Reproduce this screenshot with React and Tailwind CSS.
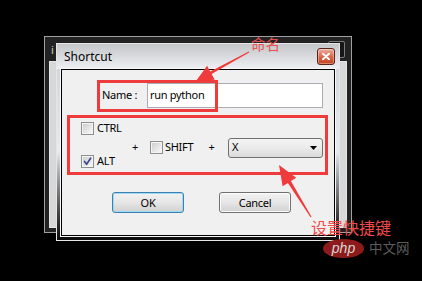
import React from 'react'

const RED = '#ef3b3b'

function Check({checked}) {
  return (
    <span className="flex w-[13px] h-[13px] shrink-0 border border-[#8e8f8f] bg-[#f4f4f4] p-[1px]">
      <span className="relative flex-1 bg-linear-to-br from-[#cfcfcf] to-[#f7f7f7]">
        {checked && (
          <svg width="11" height="11" viewBox="0 0 11 11" className="absolute -left-[1px] -top-[1px]">
            <path d="M2.5 5.5 L4.6 8.3 L8.6 2.2" fill="none" stroke="#3c4a8e" strokeWidth="1.7" strokeLinecap="round" strokeLinejoin="round" />
          </svg>
        )}
      </span>
    </span>
  )
}

function WinButton({label, primary}) {
  return (
    <button className={'w-[72px] h-[21px] rounded-[3px] border text-[11px] leading-none tracking-[-0.3px] text-black bg-linear-to-b from-[#f2f2f2] via-[#e6e6e6] via-50% to-[#d0d0d0] ' + (primary ? 'border-[#3c7fb1] shadow-[inset_0_0_0_1px_#9fdaf3]' : 'border-[#707070] shadow-[inset_0_0_0_1px_#fbfbfb]')}>
      {label}
    </button>
  )
}

export default function App() {
  return (
    <div className="relative w-[422px] h-[281px] bg-black overflow-hidden font-['Noto_Sans',sans-serif]">
      {/* window behind */}
      <div className="absolute left-[44px] top-[36px] w-[308px] h-[197px] border border-[#a0a0a0] bg-[#222] flex flex-col">
        <div className="h-[24px] flex items-start justify-between px-[6px] pt-[4px]">
          <span className="text-[11px] leading-none text-[#cfcfcf] pt-[3px]">i</span>
          <div className="w-[17px] h-[17px] border border-[#7a7a7a] rounded-[2px] bg-[#161616]" />
        </div>
        <div className="flex-1 mx-[4px] mb-[4px] border border-[#e6e6e6] bg-[#d8d8d8]" />
      </div>

      {/* Shortcut dialog */}
      <div className="absolute left-[56px] top-[43px] w-[284px] h-[198px] border border-[#e6e6e6] bg-linear-to-b from-[#cfd2d6] via-[#e6ebf0] via-55% to-[#0a0a0a] flex flex-col">
        <div className="h-[25px] shrink-0 flex items-center justify-between pl-[7px] pr-[4px] bg-linear-to-b from-[#c4c6c9] to-[#eef0f3]">
          <span className="text-[12px] leading-none text-black">Shortcut</span>
          <div className="w-[18px] h-[17px] rounded-[3px] border border-[#5b2418] bg-linear-to-b from-[#eab0a0] via-[#d9694c] via-50% to-[#c2421f] flex items-center justify-center shadow-[inset_0_0_0_1px_rgba(255,255,255,0.35)]">
            <svg width="8" height="7" viewBox="0 0 8 7">
              <path d="M1 0.8 L7 6.2 M7 0.8 L1 6.2" stroke="#fff" strokeWidth="2" strokeLinecap="round" />
            </svg>
          </div>
        </div>

        <div className="flex-1 mx-[4px] mb-[4px] border border-black bg-[#f0f0f0] shadow-[0_0_0_1px_#f8f8f8] pt-[13px] text-[11px] tracking-[-0.3px] text-black">
          <div className="flex items-center pl-[40px]">
            <span className="w-[45px]">Name :</span>
            <div className="w-[176px] h-[25px] border border-[#abadb3] bg-white flex items-center pl-[2px]">run python</div>
          </div>

          <div className="flex items-center pl-[19px] mt-[14px]">
            <div className="w-[45px] flex flex-col gap-[20px]">
              <label className="flex items-center gap-[3px] h-[13px]">
                <Check />
                <span className="text-[11px]">CTRL</span>
              </label>
              <label className="flex items-center gap-[3px] h-[13px]">
                <Check checked />
                <span>ALT</span>
              </label>
            </div>
            <div className="flex items-center mt-[5px]">
              <span className="w-[18px] text-center">+</span>
              <span className="ml-[6px]"><Check /></span>
              <span className="ml-[2px] w-[37px]">SHIFT</span>
              <span className="w-[19px] text-center">+</span>
              <div className="ml-[7px] w-[95px] h-[20px] rounded-[3px] border border-[#707070] bg-linear-to-b from-[#f3f3f3] via-[#ebebeb] via-50% to-[#dadada] flex items-center justify-between pl-[3px] pr-[5px]">
                <span>X</span>
                <svg width="7" height="4" viewBox="0 0 7 4"><path d="M0 0 H7 L3.5 4 Z" fill="#000" /></svg>
              </div>
            </div>
          </div>

          <div className="flex pl-[50px] gap-[35px] mt-[24px]">
            <WinButton label="OK" primary />
            <WinButton label="Cancel" />
          </div>
        </div>
      </div>

      {/* annotations */}
      <div className="absolute left-[97px] top-[80px] w-[121px] h-[32px] border-[3px] border-[#ef3b3b]" />
      <div className="absolute left-[67px] top-[115px] w-[261px] h-[60px] border-[3px] border-[#ef3b3b]" />
      <svg className="absolute left-0 top-0 pointer-events-none" width="422" height="281" viewBox="0 0 422 281">
        <polygon fill={RED} points="196,81 207.1,65.8 210.2,71.5 248.8,51.6 249.2,52.4 211.6,74.1 214.7,79.8" />
        <polygon fill={RED} points="279,165 296.2,177.8 290.9,181.1 311.5,216.7 310.5,217.3 287.9,182.9 282.6,186.2" />
      </svg>
      <span className="absolute left-[251px] top-[37px] text-[14.5px] leading-none text-[#e85050] font-['Noto_Sans_CJK_SC',sans-serif]">命名</span>
      <span className="absolute left-[311px] top-[219px] text-[16px] leading-none text-[#f04a4a] font-['Noto_Sans_CJK_SC',sans-serif]">设置快捷键</span>

      {/* watermark */}
      <div className="absolute left-[323px] top-[239px] w-[41px] h-[19px] rounded-[50%] bg-[#8e1b1b] flex items-center justify-center">
        <span className="text-[14px] leading-none italic text-[#d8d8d8] font-['Liberation_Sans',sans-serif] -mt-[2px]">php</span>
      </div>
      <span className="absolute left-[369px] top-[241px] text-[13.5px] leading-none text-[#5c5c5c] font-['Noto_Sans_CJK_SC',sans-serif]">中文网</span>
    </div>
  )
}
